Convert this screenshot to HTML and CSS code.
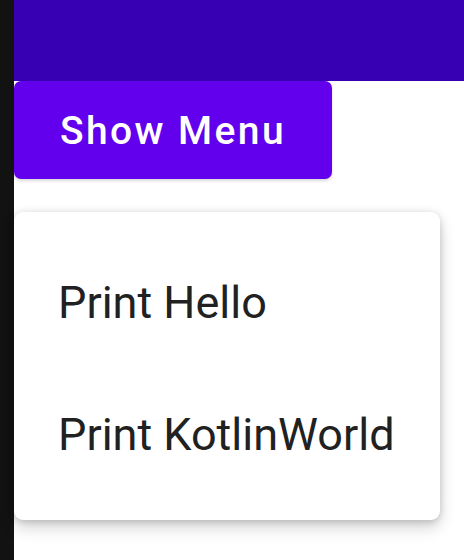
FILE: index.html
```html
<!DOCTYPE html>
<html>
<head>
<meta charset="utf-8">
<link rel="stylesheet" href="styles.css">
</head>
<body>
<div class="screen">
  <div class="edge"></div>
  <div class="main">
    <div class="appbar"></div>
    <div class="content">
      <button class="btn">Show Menu</button>
      <div class="menu">
        <div class="item">Print Hello</div>
        <div class="item">Print KotlinWorld</div>
      </div>
    </div>
  </div>
</div>
</body>
</html>
```
FILE: styles.css
```css
html, body {
  margin: 0;
  padding: 0;
  background: #ffffff;
}
.screen {
  display: flex;
  width: 464px;
  height: 560px;
  overflow: hidden;
}
.edge {
  width: 14px;
  flex: none;
  background: #121212;
}
.main {
  flex: 1;
  display: flex;
  flex-direction: column;
}
.appbar {
  height: 81px;
  background: #3700b3;
}
.content {
  display: flex;
  flex-direction: column;
  align-items: flex-start;
}
.btn {
  width: 318px;
  height: 98px;
  border: none;
  border-radius: 7px;
  background: #6200ee;
  color: #ffffff;
  font-family: Roboto, "Liberation Sans", sans-serif;
  font-weight: 500;
  font-size: 39px;
  letter-spacing: 2.4px;
  padding: 2px 0 0 0;
  box-shadow: 0 2px 3px rgba(0,0,0,0.15);
}
.menu {
  margin-top: 33px;
  width: 426px;
  padding: 22px 0;
  background: #ffffff;
  border-radius: 9px;
  box-shadow: 0 8px 16px rgba(0,0,0,0.16), 0 2px 6px rgba(0,0,0,0.12), 0 0 12px rgba(0,0,0,0.06);
}
.item {
  height: 132px;
  box-sizing: border-box;
  display: flex;
  align-items: center;
  padding: 4px 44px 0 44px;
  font-family: Roboto, "Liberation Sans", sans-serif;
  font-size: 45px;
  color: #212121;
}
```
